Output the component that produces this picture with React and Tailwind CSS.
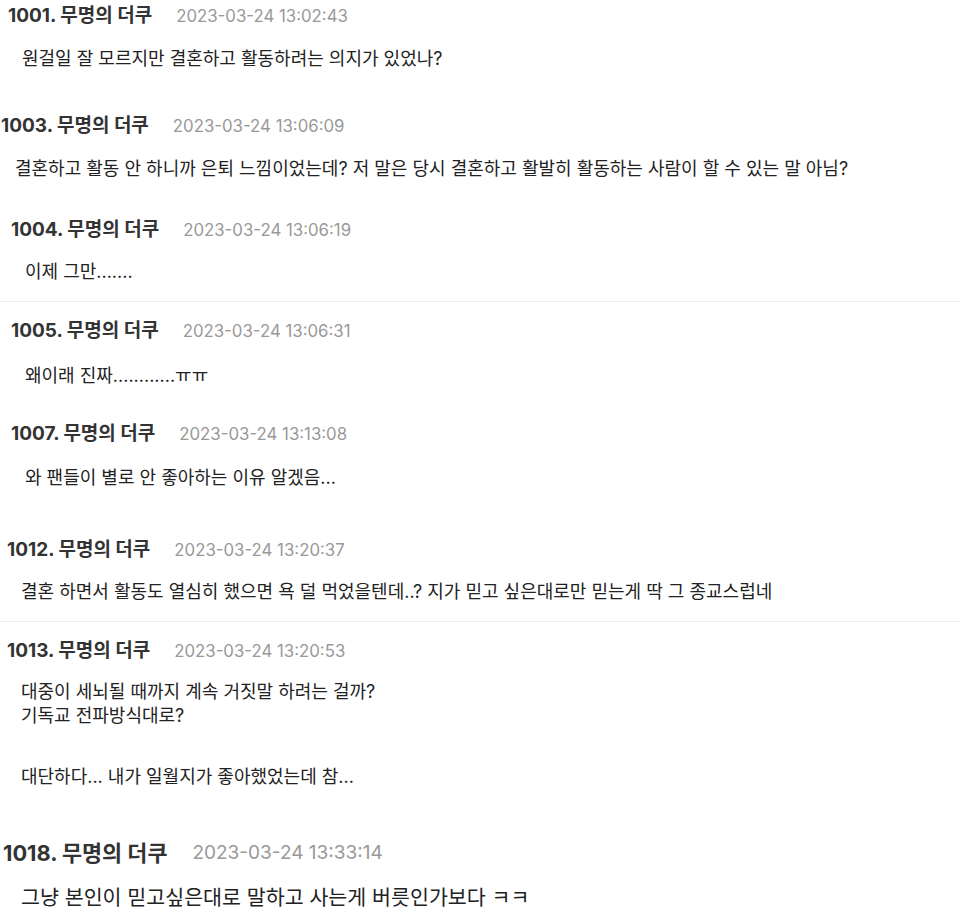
import React from "react";

const font = { fontFamily: "Inter, 'Noto Sans CJK KR', sans-serif" };

function Header({ num, date, big }) {
  return (
    <div className={big ? "flex items-center h-[26px] leading-[26px]" : "flex items-center h-[24px] leading-[24px]"}>
      <span className={big ? "text-[21.8px] font-bold text-[#333]" : "text-[19px] font-bold text-[#333]"}>
        {num}. 무명의 더쿠
      </span>
      <span className={big ? "ml-[25px] text-[19px] text-[#999]" : "ml-[24px] text-[16.8px] text-[#999]"}>{date}</span>
    </div>
  );
}

function Body({ children, big, className = "" }) {
  return (
    <div className={(big ? "text-[20.6px] leading-[26px] " : "text-[18px] leading-[24px] ") + "text-[#222] " + className}>
      {children}
    </div>
  );
}

export default function App() {
  return (
    <div className="w-[960px] h-[923px] bg-white overflow-hidden" style={font}>
      <div className="pt-[4px] pl-[8px]">
        <Header num="1001" date="2023-03-24 13:02:43" />
        <Body className="mt-[19px] pl-[14px] text-[18.3px]">원걸일 잘 모르지만 결혼하고 활동하려는 의지가 있었나?</Body>
      </div>
      <div className="mt-[43px] pl-[1px]">
        <Header num="1003" date="2023-03-24 13:06:09" />
        <Body className="mt-[19px] pl-[14px]">결혼하고 활동 안 하니까 은퇴 느낌이었는데? 저 말은 당시 결혼하고 활발히 활동하는 사람이 할 수 있는 말 아님?</Body>
      </div>
      <div className="mt-[37px] pl-[11px]">
        <Header num="1004" date="2023-03-24 13:06:19" />
        <Body className="mt-[18px] pl-[14px]">이제 그만.......</Body>
      </div>
      <div className="mt-[17px] border-t border-[#ebebeb]" />
      <div className="mt-[17px] pl-[11px]">
        <Header num="1005" date="2023-03-24 13:06:31" />
        <Body className="mt-[21px] pl-[14px]">왜이래 진짜............ㅠㅠ</Body>
      </div>
      <div className="mt-[34px] pl-[11px]">
        <Header num="1007" date="2023-03-24 13:13:08" />
        <Body className="mt-[20px] pl-[14px]">와 팬들이 별로 안 좋아하는 이유 알겠음...</Body>
      </div>
      <div className="mt-[48px] pl-[7px]">
        <Header num="1012" date="2023-03-24 13:20:37" />
        <Body className="mt-[18px] pl-[14px]">결혼 하면서 활동도 열심히 했으면 욕 덜 먹었을텐데..? 지가 믿고 싶은대로만 믿는게 딱 그 종교스럽네</Body>
      </div>
      <div className="mt-[17px] border-t border-[#ebebeb]" />
      <div className="mt-[17px] pl-[7px]">
        <Header num="1013" date="2023-03-24 13:20:53" />
        <Body className="mt-[17px] pl-[14px]">
          <p>대중이 세뇌될 때까지 계속 거짓말 하려는 걸까?</p>
          <p>기독교 전파방식대로?</p>
          <p className="mt-[37px]">대단하다... 내가 일월지가 좋아했었는데 참...</p>
        </Body>
      </div>
      <div className="mt-[51px] pl-[3px]">
        <Header num="1018" date="2023-03-24 13:33:14" big />
        <Body big className="mt-[19px] pl-[18px]">그냥 본인이 믿고싶은대로 말하고 사는게 버릇인가보다 ㅋㅋ</Body>
      </div>
    </div>
  );
}
